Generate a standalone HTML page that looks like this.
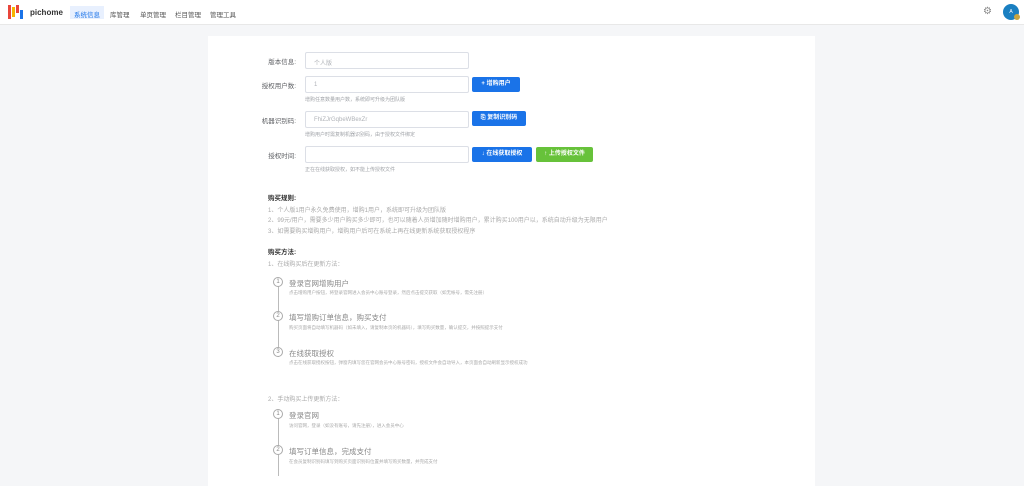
<!DOCTYPE html>
<html><head><meta charset="utf-8"><style>
*{margin:0;padding:0;box-sizing:border-box}
body{width:1024px;height:476px;overflow:hidden;background:#f5f6f8;font-family:"Liberation Sans","Noto Sans CJK SC",sans-serif;position:relative;color:#606266}
.hd{position:absolute;left:0;top:0;width:1024px;height:25px;background:#fff;border-bottom:1px solid #e8e8e8}
.a{position:absolute;white-space:nowrap}
.nav{font-size:6.5px;color:#555;top:9px}
.card{position:absolute;left:208px;top:36px;width:607px;height:450px;background:#fff}
.lbl{font-size:6.5px;color:#606266;text-align:right;width:70px;left:226px}
.inp{left:305px;width:164px;height:17px;border:1px solid #dcdfe6;border-radius:2px;font-size:6px;color:#b0b3b8;padding:5px 8px}
.btn{height:15px;border-radius:2px;color:#fff;font-size:6px;font-weight:bold;text-align:center;line-height:15px;background:#1a73e8}
.hint{font-size:5px;color:#a0a3a8;left:305px}
.s{font-size:6px;color:#aaa}
.h{font-size:6.5px;color:#333;font-weight:bold}
.c{width:10px;height:10px;border:1px solid #aaa;border-radius:50%;font-size:6px;line-height:8px;text-align:center;color:#888;background:#fff}
.t{font-size:7.5px;color:#888}
.d{font-size:4.5px;color:#aaa}
.vl{position:absolute;width:1px;background:#bbb;left:278px}
</style></head><body>
<div class="hd">
<div class="a" style="left:8px;top:5px;width:3px;height:14px;background:#e9453b"></div>
<div class="a" style="left:12px;top:7px;width:3px;height:10px;background:#f7b500"></div>
<div class="a" style="left:16px;top:5px;width:3px;height:8px;background:#e9453b"></div>
<div class="a" style="left:20px;top:10px;width:3px;height:9px;background:#1a73e8"></div>
<div class="a" style="left:30px;top:8px;font-size:8px;font-weight:bold;color:#333">pichome</div>
<div class="a nav" style="left:70px;top:6px;height:13px;padding:3px 4px;background:#e8f0fe;color:#1a73e8">系统信息</div>
<div class="a nav" style="left:110px">库管理</div>
<div class="a nav" style="left:140px">单页管理</div>
<div class="a nav" style="left:175px">栏目管理</div>
<div class="a nav" style="left:210px">管理工具</div>
<div class="a" style="left:983px;top:6px;font-size:10px;color:#888">⚙</div>
<div class="a" style="left:1003px;top:4px;width:16px;height:16px;border-radius:50%;background:#1a7fc1;color:#fff;font-size:5px;text-align:center;line-height:16px">A</div>
<div class="a" style="left:1014px;top:14px;width:6px;height:6px;border-radius:50%;background:#c8a440"></div>
</div>
<div class="card"></div>
<div class="a lbl" style="top:56px">版本信息:</div>
<div class="a inp" style="top:52px">个人版</div>
<div class="a lbl" style="top:80px">授权用户数:</div>
<div class="a inp" style="top:76px">1</div>
<div class="a btn" style="left:472px;top:77px;width:48px">+ 增购用户</div>
<div class="a hint" style="top:96px">增购任意数量用户数，系统即可升级为团队版</div>
<div class="a lbl" style="top:115px">机器识别码:</div>
<div class="a inp" style="top:111px">FhiZJrGqbeWBexZr</div>
<div class="a btn" style="left:472px;top:111px;width:54px">⎘ 复制识别码</div>
<div class="a hint" style="top:131px">增购用户时需复制机器识别码，由于授权文件绑定</div>
<div class="a lbl" style="top:150px">授权时间:</div>
<div class="a inp" style="top:146px"></div>
<div class="a btn" style="left:472px;top:147px;width:60px">↓ 在线获取授权</div>
<div class="a btn" style="left:536px;top:147px;width:57px;background:#67c23a">↑ 上传授权文件</div>
<div class="a hint" style="top:166px">正在在线获取授权，如不能上传授权文件</div>
<div class="a h" style="left:268px;top:192px">购买规则:</div>
<div class="a s" style="left:268px;top:205px">1、个人版1用户永久免费使用，增购1用户，系统即可升级为团队版</div>
<div class="a s" style="left:268px;top:215px">2、99元/用户，需要多少用户购买多少即可，也可以随着人员增加随时增购用户，累计购买100用户以，系统自动升级为无限用户</div>
<div class="a s" style="left:268px;top:226px">3、如需要购买增购用户，增购用户后可在系统上再在线更新系统获取授权程序</div>
<div class="a h" style="left:268px;top:246px">购买方法:</div>
<div class="a s" style="left:268px;top:259px">1、在线购买后在更新方法：</div>
<div class="vl" style="top:282px;height:75px"></div>
<div class="a c" style="left:273px;top:277px">1</div>
<div class="a t" style="left:289px;top:278px">登录官网增购用户</div>
<div class="a d" style="left:289px;top:290px">点击增购用户按钮，将登录官网进入会员中心账号登录，然后点击提交获取（如无帐号，需先注册）</div>
<div class="a c" style="left:273px;top:311px">2</div>
<div class="a t" style="left:289px;top:312px">填写增购订单信息，购买支付</div>
<div class="a d" style="left:289px;top:325px">购买页面将自动填写机器码（如未填入，请复制本页的机器码），填写购买数量，确认提交，并按照提示支付</div>
<div class="a c" style="left:273px;top:347px">3</div>
<div class="a t" style="left:289px;top:348px">在线获取授权</div>
<div class="a d" style="left:289px;top:360px">点击在线获取授权按钮，弹窗内填写您在官网会员中心账号密码，授权文件会自动导入，本页面会自动刷新显示授权成功</div>
<div class="a s" style="left:268px;top:394px">2、手动购买上传更新方法：</div>
<div class="vl" style="top:414px;height:62px"></div>
<div class="a c" style="left:273px;top:409px">1</div>
<div class="a t" style="left:289px;top:410px">登录官网</div>
<div class="a d" style="left:289px;top:423px">访问官网，登录（如没有账号，请先注册），进入会员中心</div>
<div class="a c" style="left:273px;top:445px">2</div>
<div class="a t" style="left:289px;top:446px">填写订单信息，完成支付</div>
<div class="a d" style="left:289px;top:459px">在会员复制识别码填写到购买页面识别码位置并填写购买数量，并完成支付</div>
</body></html>
